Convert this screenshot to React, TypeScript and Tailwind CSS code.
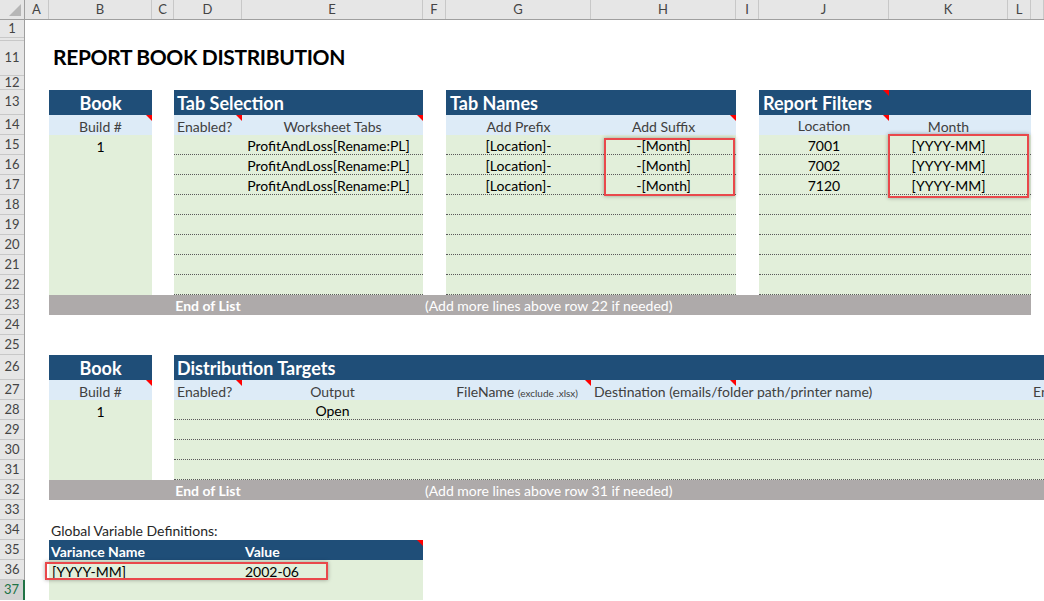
import React from "react";

function Tri() {
  return (
    <span className="absolute top-0 right-0 w-0 h-0 border-l-[6px] border-l-transparent border-t-[6px] border-t-[#ff0000]" />
  );
}

const COLS = [
  { l: "A", c: "w-[24px]" },
  { l: "B", c: "w-[103px]" },
  { l: "C", c: "w-[22px]" },
  { l: "D", c: "w-[68px]" },
  { l: "E", c: "w-[181px]" },
  { l: "F", c: "w-[23px]" },
  { l: "G", c: "w-[145px]" },
  { l: "H", c: "w-[145px]" },
  { l: "I", c: "w-[23px]" },
  { l: "J", c: "w-[130px]" },
  { l: "K", c: "w-[119px]" },
  { l: "L", c: "w-[23px]" },
  { l: "", c: "flex-1" },
];

const ROWS: { n: string; c: string }[] = [
  { n: "1", c: "h-[18px]" },
  { n: "", c: "h-[3px]" },
  { n: "11", c: "h-[35px]" },
  { n: "12", c: "h-[14px]" },
  { n: "13", c: "h-[25px]" },
  ...["14", "15", "16", "17", "18", "19", "20", "21", "22", "23", "24", "25"].map((n) => ({ n, c: "h-[20px]" })),
  { n: "26", c: "h-[25px]" },
  ...["27", "28", "29", "30", "31", "32", "33", "34", "35", "36"].map((n) => ({ n, c: "h-[20px]" })),
];

const EIGHT = [0, 1, 2, 3, 4, 5, 6, 7];
const FOUR = [0, 1, 2, 3];

const DOT = "h-[20px] border-b border-dotted border-[#5a5a5a] flex items-center";

export default function App() {
  const tabs = ["ProfitAndLoss[Rename:PL]", "ProfitAndLoss[Rename:PL]", "ProfitAndLoss[Rename:PL]"];
  const prefix = ["[Location]-", "[Location]-", "[Location]-"];
  const suffix = ["-[Month]", "-[Month]", "-[Month]"];
  const locs = ["7001", "7002", "7120"];
  const months = ["[YYYY-MM]", "[YYYY-MM]", "[YYYY-MM]"];

  return (
    <div className="relative w-[1044px] h-[601px] overflow-hidden bg-white font-['Lato','Liberation_Sans',sans-serif] text-[14px] text-black">
      {/* column header */}
      <div className="flex h-[20px] bg-[#e6e6e6] border-b border-[#9f9f9f] text-[#444] text-[13px]">
        <div className="relative w-[25px] shrink-0 border-r border-[#9f9f9f]">
          <span className="absolute right-[3px] bottom-[3px] w-0 h-0 border-l-[12px] border-l-transparent border-b-[12px] border-b-[#b6b6b6]" />
        </div>
        {COLS.map((c, i) => (
          <div key={i} className={c.c + " flex items-center justify-center border-r border-[#c8c8c8] shrink-0"}>
            {c.l}
          </div>
        ))}
      </div>

      <div className="flex">
        {/* row header */}
        <div className="w-[25px] shrink-0 flex flex-col bg-[#e6e6e6] border-r border-[#9f9f9f] text-[#444] text-[13px]">
          {ROWS.map((r, i) => (
            <div key={i} className={r.c + " flex items-center justify-center border-b border-[#c8c8c8] shrink-0"}>
              {r.n}
            </div>
          ))}
          <div className="h-[20px] flex items-center justify-center bg-[#d2d2d2] text-[#217346] border-r-2 border-[#217346] -mr-px">
            37
          </div>
        </div>

        {/* sheet */}
        <div className="flex-1 min-w-0 flex flex-col">
          <div className="h-[18px]" />
          <div className="h-[3px]" />
          <div className="h-[35px] flex items-center pl-[28px] pb-[3px] text-[21px] font-bold tracking-[-0.35px] whitespace-nowrap">
            REPORT BOOK DISTRIBUTION
          </div>
          <div className="h-[14px]" />

          {/* top section */}
          <div className="flex">
            <div className="w-[24px] shrink-0" />
            {/* Book */}
            <div className="w-[103px] shrink-0 flex flex-col">
              <div className="h-[25px] bg-[#1f4e78] text-white font-bold text-[18px] flex items-center justify-center pt-[2px]">Book</div>
              <div className="relative h-[20px] bg-[#ddebf7] text-[#404040] flex items-center justify-center pt-[2px]">
                Build #<Tri />
              </div>
              <div className="h-[160px] bg-[#e2efda]">
                <div className="h-[20px] flex items-center justify-center pt-[2px]">1</div>
              </div>
            </div>
            <div className="w-[22px] shrink-0" />
            {/* Tab Selection */}
            <div className="w-[249px] shrink-0 flex flex-col">
              <div className="h-[25px] bg-[#1f4e78] text-white font-bold text-[18px] flex items-center pl-[3px] pt-[2px]">Tab Selection</div>
              <div className="h-[20px] bg-[#ddebf7] text-[#404040] flex">
                <div className="relative w-[68px] flex items-center pl-[3px] pt-[2px]">
                  Enabled?<Tri />
                </div>
                <div className="relative w-[181px] flex items-center justify-center pt-[2px]">
                  Worksheet Tabs<Tri />
                </div>
              </div>
              <div className="bg-[#e2efda] flex flex-col">
                {EIGHT.map((i) => (
                  <div key={i} className={DOT}>
                    <div className="w-[68px] shrink-0" />
                    <div className="w-[181px] shrink-0 flex justify-center pt-[2px] pr-[8px] whitespace-nowrap">{tabs[i] ?? ""}</div>
                  </div>
                ))}
              </div>
            </div>
            <div className="w-[23px] shrink-0" />
            {/* Tab Names */}
            <div className="w-[290px] shrink-0 flex flex-col">
              <div className="h-[25px] bg-[#1f4e78] text-white font-bold text-[18px] flex items-center pl-[4px] pt-[2px]">Tab Names</div>
              <div className="h-[20px] bg-[#ddebf7] text-[#404040] flex">
                <div className="w-[145px] flex items-center justify-center pt-[2px]">Add Prefix</div>
                <div className="relative w-[145px] flex items-center justify-center pt-[2px]">
                  Add Suffix<Tri />
                </div>
              </div>
              <div className="bg-[#e2efda] flex flex-col">
                {EIGHT.map((i) => (
                  <div key={i} className={DOT}>
                    <div className="w-[145px] flex justify-center pt-[2px]">{prefix[i] ?? ""}</div>
                    <div className="w-[145px] flex justify-center pt-[2px]">{suffix[i] ?? ""}</div>
                  </div>
                ))}
              </div>
            </div>
            <div className="w-[23px] shrink-0" />
            {/* Report Filters */}
            <div className="w-[272px] shrink-0 flex flex-col">
              <div className="h-[25px] bg-[#1f4e78] text-white font-bold text-[18px] flex">
                <div className="relative w-[130px] flex items-center pl-[4px] pt-[2px] whitespace-nowrap">
                  Report Filters<Tri />
                </div>
              </div>
              <div className="h-[20px] bg-[#ddebf7] text-[#404040] flex">
                <div className="relative w-[130px] flex items-center justify-center pt-[1px]">
                  Location<Tri />
                </div>
                <div className="w-[119px] flex items-center justify-center pt-[2px]">Month</div>
              </div>
              <div className="bg-[#e2efda] flex flex-col">
                {EIGHT.map((i) => (
                  <div key={i} className={DOT}>
                    <div className="w-[130px] flex justify-center pt-[2px]">{locs[i] ?? ""}</div>
                    <div className="w-[119px] flex justify-center pt-[2px]">{months[i] ?? ""}</div>
                  </div>
                ))}
              </div>
            </div>
          </div>

          {/* row 23 */}
          <div className="flex h-[20px]">
            <div className="w-[24px] shrink-0" />
            <div className="w-[982px] shrink-0 bg-[#aeaaaa] text-white flex items-center pt-[1px]">
              <div className="w-[125px] shrink-0" />
              <div className="w-[68px] shrink-0 flex justify-center font-bold whitespace-nowrap">End of List</div>
              <div className="w-[181px] shrink-0" />
              <div className="pl-[2px] whitespace-nowrap">(Add more lines above row 22 if needed)</div>
            </div>
          </div>
          <div className="h-[20px]" />
          <div className="h-[20px]" />

          {/* second section */}
          <div className="flex">
            <div className="w-[24px] shrink-0" />
            <div className="w-[103px] shrink-0 flex flex-col">
              <div className="h-[25px] bg-[#1f4e78] text-white font-bold text-[18px] flex items-center justify-center pt-[2px]">Book</div>
              <div className="relative h-[20px] bg-[#ddebf7] text-[#404040] flex items-center justify-center pt-[2px]">
                Build #<Tri />
              </div>
              <div className="h-[80px] bg-[#e2efda]">
                <div className="h-[20px] flex items-center justify-center pt-[2px]">1</div>
              </div>
            </div>
            <div className="w-[22px] shrink-0" />
            <div className="flex-1 min-w-0 flex flex-col overflow-hidden">
              <div className="h-[25px] bg-[#1f4e78] text-white font-bold text-[18px] flex items-center pl-[3px] pt-[2px]">Distribution Targets</div>
              <div className="h-[20px] bg-[#ddebf7] text-[#404040] flex whitespace-nowrap">
                <div className="relative w-[68px] shrink-0 flex items-center pl-[3px] pt-[2px]">
                  Enabled?<Tri />
                </div>
                <div className="w-[181px] shrink-0 flex items-center justify-center pt-[2px]">Output</div>
                <div className="relative w-[168px] shrink-0 flex items-center justify-end pr-[13px] pt-[2px]">
                  <span>
                    FileName <span className="text-[10px]">(exclude .xlsx)</span>
                  </span>
                  <Tri />
                </div>
                <div className="relative w-[145px] shrink-0 flex items-center pt-[2px]">
                  <span className="pl-[3px] whitespace-nowrap">Destination (emails/folder path/printer name)</span>
                  <Tri />
                </div>
                <div className="w-[295px] shrink-0" />
                <div className="flex items-center pl-[2px] pt-[2px]">Enabled</div>
              </div>
              <div className="bg-[#e2efda] flex flex-col">
                {FOUR.map((i) => (
                  <div key={i} className={DOT}>
                    <div className="w-[68px] shrink-0" />
                    <div className="w-[181px] shrink-0 flex justify-center pt-[2px]">{i === 0 ? "Open" : ""}</div>
                  </div>
                ))}
              </div>
            </div>
          </div>

          {/* row 32 */}
          <div className="flex h-[20px]">
            <div className="w-[24px] shrink-0" />
            <div className="flex-1 bg-[#aeaaaa] text-white flex items-center pt-[1px]">
              <div className="w-[125px] shrink-0" />
              <div className="w-[68px] shrink-0 flex justify-center font-bold whitespace-nowrap">End of List</div>
              <div className="w-[181px] shrink-0" />
              <div className="pl-[2px] whitespace-nowrap">(Add more lines above row 31 if needed)</div>
            </div>
          </div>
          <div className="h-[20px]" />
          {/* row 34 */}
          <div className="h-[20px] flex items-center pl-[26px] pt-[1px] text-[#262626]">Global Variable Definitions:</div>
          {/* rows 35-37 */}
          <div className="flex">
            <div className="w-[24px] shrink-0" />
            <div className="w-[374px] shrink-0 flex flex-col">
              <div className="h-[20px] bg-[#1f4e78] text-white font-bold flex">
                <div className="w-[193px] flex items-center pl-[2px] pt-[2px]">Variance Name</div>
                <div className="relative w-[181px] flex items-center pl-[3px] pt-[2px]">
                  Value<Tri />
                </div>
              </div>
              <div className="h-[40px] bg-[#e2efda]">
                <div className="h-[20px] flex">
                  <div className="w-[193px] flex items-center pl-[3px] pt-[2px]">[YYYY-MM]</div>
                  <div className="w-[181px] flex items-center pl-[3px] pt-[2px]">2002-06</div>
                </div>
              </div>
            </div>
          </div>
        </div>
      </div>

      {/* red highlight boxes */}
      <div className="absolute left-[604px] top-[138px] w-[131px] h-[58px] border-2 border-[#e9484b] shadow-[0_0_4px_rgba(0,0,0,0.35)]" />
      <div className="absolute left-[888px] top-[134px] w-[141px] h-[64px] border-2 border-[#e9484b] shadow-[0_0_4px_rgba(0,0,0,0.35)]" />
      <div className="absolute left-[45px] top-[562px] w-[283px] h-[18px] border-2 border-[#e9484b] shadow-[0_0_4px_rgba(0,0,0,0.35)]" />
    </div>
  );
}
